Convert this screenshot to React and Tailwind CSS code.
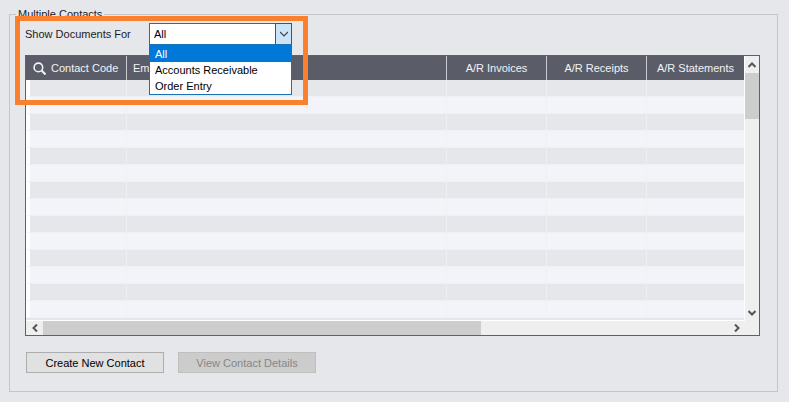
const columns = [
  { name: 'A/R Invoices', className: 'w-[100px] border-r' },
  { name: 'A/R Receipts', className: 'w-[100px] border-r' },
  { name: 'A/R Statements', className: 'w-[97px]' },
];

const options = ['All', 'Accounts Receivable', 'Order Entry'];

function Chevron({ className, points, stroke = 2 }) {
  return (
    <svg className={className} viewBox="0 0 8 8" fill="none" stroke="currentColor" strokeWidth={stroke}>
      <polyline points={points} />
    </svg>
  );
}

function DocumentFilter() {
  return (
    <div className="flex items-center pt-0.5 pl-[15px]">
      <label htmlFor="documents" className="w-[124px]">Show Documents For</label>
      <div className="relative w-[143px]">
        <select
          id="documents"
          defaultValue="All"
          className="block h-[22px] w-full appearance-none border border-[#1a70b0] bg-white pl-1 text-black outline-none"
        >
          {options.map((option) => (
            <option key={option}>{option}</option>
          ))}
        </select>
        <span className="pointer-events-none absolute top-0 right-0 flex h-[22px] w-[17px] items-center justify-center border border-[#0f639f] bg-[#cce4f7] text-[#404040]">
          <Chevron className="h-2 w-2" points="0,2 4,6 8,2" stroke={1.2} />
        </span>

        {/* Open list */}
        <ul className="absolute top-[21px] left-0 z-10 w-full border border-[#1a70b0] bg-white text-black">
          {options.map((option, i) => (
            <li key={option} className={`pl-[5px] leading-4 ${i === 0 ? 'bg-[#0078d7] pt-px text-white' : ''}`}>
              {option}
            </li>
          ))}
        </ul>
      </div>
    </div>
  );
}

function ContactsTable() {
  return (
    <table className="w-full table-fixed border-separate border-spacing-0">
      <thead className="bg-[#5a5d68] text-[#f2f3f5]">
        <tr className="h-6">
          <th className="w-[101px] border-r border-[#c9cbd1] p-0 font-normal">
            <div className="flex items-center gap-[5px] pl-[7px]">
              <svg className="h-[13px] w-[13px]" viewBox="0 0 13 13" fill="none" stroke="currentColor" strokeWidth="1.6">
                <circle cx="5.4" cy="5.4" r="4.3" />
                <path d="M8.5 8.5l4 4" strokeWidth="2" />
              </svg>
              Contact Code
            </div>
          </th>
          <th className="border-r border-[#c9cbd1] p-0 pl-1.5 text-left font-normal">Email</th>
          {columns.map((column) => (
            <th key={column.name} className={`border-[#c9cbd1] p-0 font-normal ${column.className}`}>
              {column.name}
            </th>
          ))}
        </tr>
      </thead>
      <tbody>
        {Array.from({ length: 14 }, (_, i) => (
          <tr key={i} className={`h-[17px] ${i % 2 === 0 ? 'bg-[#e6e7ea]' : 'bg-[#f3f4f9]'}`}>
            <td className="border-r border-b border-l-4 border-[#eff0f3] border-l-white p-0" />
            <td className="border-r border-b border-[#eff0f3] p-0" />
            <td className="border-r border-b border-[#eff0f3] p-0" />
            <td className="border-r border-b border-[#eff0f3] p-0" />
            <td className="border-b border-[#eff0f3] p-0" />
          </tr>
        ))}
      </tbody>
    </table>
  );
}

export default function App() {
  return (
    <div className="relative min-h-screen bg-[#e6e7eb] pt-[7px] pr-[11px] pb-2.5 pl-[9px] font-['Liberation_Sans',Arial,sans-serif] text-[11px] leading-[14px] text-[#1c1c1c]">
      <fieldset className="min-w-0 border border-[#c5c6cb] pb-[18px]">
        <legend className="ml-1.5 px-0.5">Multiple Contacts</legend>

        <DocumentFilter />

        {/* Grid with its scroll bars */}
        <div className="mt-2.5 mr-[17px] ml-[15px] border border-[#5f6168] bg-[#efefef]">
          <div className="flex">
            <div className="min-w-0 flex-1 border-r border-b border-white bg-[#e6e7ea] pb-0.5">
              <ContactsTable />
            </div>
            <div className="flex w-3.5 flex-col items-center text-[#55565b]">
              <div className="flex h-[17px] items-center">
                <Chevron className="h-2 w-2" points="0.5,6 4,2.5 7.5,6" />
              </div>
              <div className="h-[46px] w-full bg-[#cdcdcd]" />
              <div className="mt-auto flex h-[17px] items-center">
                <Chevron className="h-2 w-2" points="0.5,2 4,5.5 7.5,2" />
              </div>
            </div>
          </div>
          <div className="flex h-3.5 items-center pr-3.5 text-[#55565b]">
            <div className="flex w-[17px] justify-center">
              <Chevron className="h-2 w-2" points="6,0.5 2.5,4 6,7.5" />
            </div>
            <div className="h-full flex-1">
              <div className="h-full w-[64%] bg-[#cdcdcd]" />
            </div>
            <div className="flex w-[17px] justify-center">
              <Chevron className="h-2 w-2" points="2,0.5 5.5,4 2,7.5" />
            </div>
          </div>
        </div>

        <div className="mt-4 ml-4 flex gap-3.5">
          <button type="button" className="h-[21px] w-[138px] border border-[#adadad] bg-[#e1e1e1] text-black">
            Create New Contact
          </button>
          <button type="button" disabled className="h-[21px] w-[138px] border border-[#bfbfbf] bg-[#cccccc] text-[#868686]">
            View Contact Details
          </button>
        </div>
      </fieldset>

      {/* Callout frame around the filter */}
      <div className="pointer-events-none absolute top-4 left-[15px] z-20 h-[89px] w-[293px] border-5 border-[#fa802d]" />
    </div>
  );
}
